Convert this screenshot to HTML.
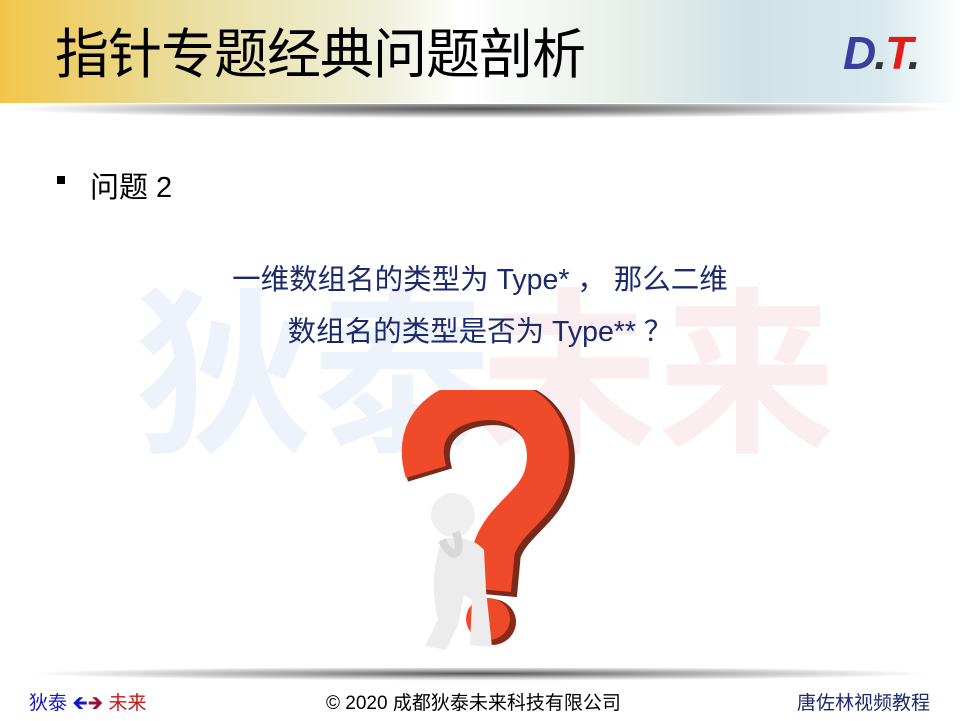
<!DOCTYPE html>
<html><head><meta charset="utf-8"><style>
body{margin:0;width:960px;height:720px;overflow:hidden;background:#fff;position:relative;font-family:"Liberation Sans","Noto Sans CJK SC",sans-serif}
.hdr{position:absolute;left:0;top:0;width:960px;height:103px;background:linear-gradient(90deg,#f2c64a 0%,#e9dc9a 18%,#eef0dc 40%,#fff 48%,#e8efe9 65%,#cfe2e8 78%,#d9eaee 92%,#fff 100%)}
.sh{position:absolute;left:10px;top:104px;width:940px;height:16px;background:radial-gradient(ellipse 50% 60% at 50% 30%,#555 0%,#999 45%,rgba(255,255,255,0) 100%)}
.title{position:absolute;left:55px;top:17px;font-size:54px;color:#000;font-family:"Noto Sans CJK SC",sans-serif;letter-spacing:-1px;line-height:66px}
.wm{position:absolute;top:262px;font-size:178px;font-weight:bold;font-family:"Noto Sans CJK SC",sans-serif;line-height:200px}
.t{position:absolute;font-family:"Liberation Sans","Noto Sans CJK SC",sans-serif;white-space:pre}
.fsh{position:absolute;left:30px;top:668px;width:900px;height:14px;background:radial-gradient(ellipse 50% 50% at 50% 40%,#555 0%,#aaa 45%,rgba(255,255,255,0) 100%)}
</style></head><body>
<div class="hdr"></div><div class="sh"></div>
<div class="title">指针专题经典问题剖析</div>
<div class="t" style="left:843px;top:26px;font-size:46px;font-weight:bold;font-style:italic;color:#3a3f9c;letter-spacing:-2px">D<span style="color:#333">.</span><span style="color:#e31b1b">T</span><span style="color:#333">.</span></div>
<div class="wm" style="left:135px;color:#eef2fb">狄泰</div>
<div class="wm" style="left:480px;color:#fbeef0">未来</div>
<div class="t" style="left:57px;top:176px;width:8px;height:8px;background:#000"></div>
<div class="t" style="left:90px;top:164px;font-size:29px;color:#000">问题 2</div>
<div class="t" style="left:0;width:960px;text-align:center;top:254px;font-size:28.5px;color:#1a2a6c;line-height:52px">一维数组名的类型为 Type* ， 那么二维<br>数组名的类型是否为 Type** ？</div>
<svg style="position:absolute;left:380px;top:390px" width="200" height="270" viewBox="0 0 200 270">
<path d="M50 85 C35 35 75 12 115 12 C165 14 180 58 168 92 C158 120 128 132 118 162 L114 205" fill="none" stroke="#7a2a1a" stroke-width="46"/>
<path d="M46 82 C31 32 71 9 111 9 C161 11 176 55 164 89 C154 117 124 129 114 159 L110 200" fill="none" stroke="#ef4a2a" stroke-width="42"/>
<ellipse cx="112" cy="232" rx="24" ry="23" fill="#8b2a1a"/>
<ellipse cx="108" cy="229" rx="22" ry="21" fill="#ee4a2a"/>
<path d="M62 150 C52 175 52 205 58 230 L45 256 L66 260 L78 235 L84 205 L92 210 L90 255 L112 257 L106 200 L104 160 C94 148 74 145 62 150Z" fill="#ececec"/>
<circle cx="73" cy="125" r="22" fill="#efefef"/>
<path d="M62 150 C72 172 84 166 76 142" fill="none" stroke="#d8d8d8" stroke-width="8"/>
</svg>
<div class="fsh"></div>
<div class="t" style="left:29px;top:688px;font-size:19px;color:#1515c8">狄泰 <span style="color:#1515c8">🡸</span><span style="color:#9b1030">🡺</span> <span style="color:#c81515">未来</span></div>
<div class="t" style="left:326px;top:688px;font-size:19px;color:#000">© 2020 成都狄泰未来科技有限公司</div>
<div class="t" style="left:797px;top:688px;font-size:19px;color:#1a2a6c">唐佐林视频教程</div>
</body></html>
